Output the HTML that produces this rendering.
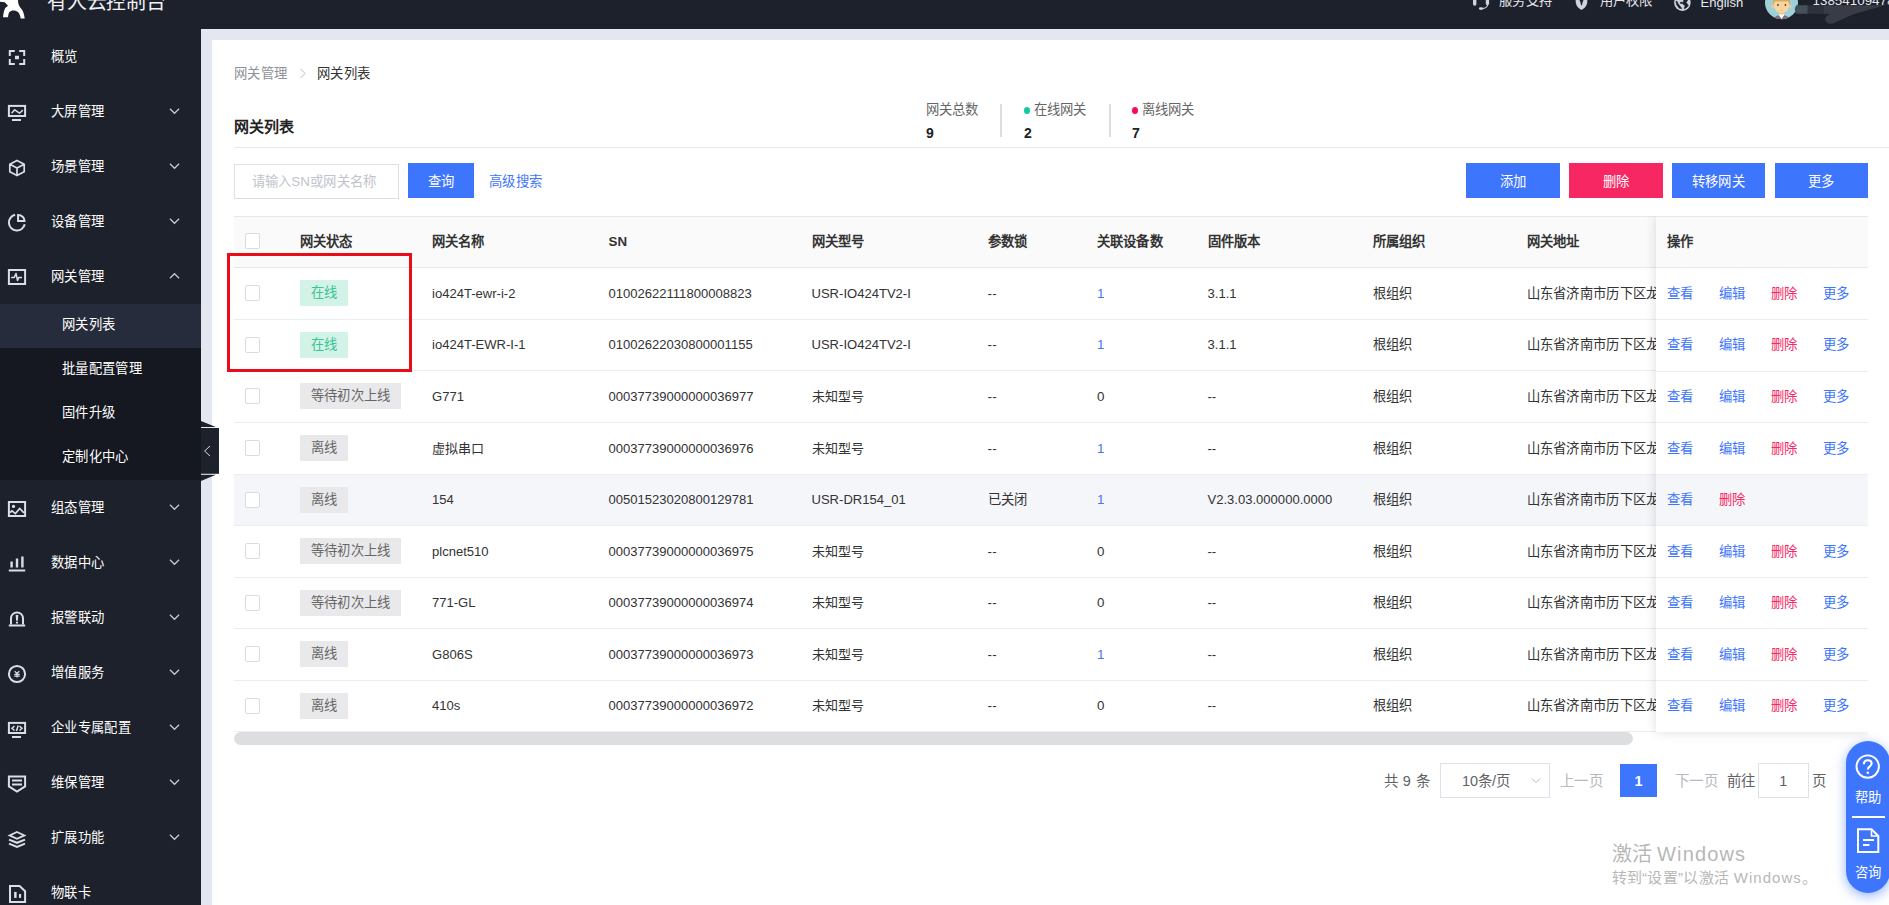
<!DOCTYPE html>
<html lang="zh-CN">
<head>
<meta charset="utf-8">
<title>有人云控制台 - 网关列表</title>
<style>
*{box-sizing:border-box;margin:0;padding:0}
html,body{width:1889px;height:905px;overflow:hidden;background:#fff}
body{position:relative;font-family:"Liberation Sans",sans-serif;font-size:13.33px;letter-spacing:.33px;color:#333;-webkit-font-smoothing:antialiased}
i{font-style:normal;display:block}
#top{position:absolute;left:0;top:0;width:1889px;height:28.5px;background:#1d212b;overflow:hidden;z-index:5}
#brand{letter-spacing:0;position:absolute;left:47px;top:-12.5px;font-size:19.9px;line-height:28px;color:#f1f2f6;white-space:nowrap;letter-spacing:-0.2px}
.tt{position:absolute;top:-7.6px;font-size:13.33px;line-height:18px;color:#e6e8ee;white-space:nowrap}
.ti{position:absolute}
#side{position:absolute;left:0;top:28.5px;width:201px;height:876.5px;background:#1d212b;overflow:hidden;z-index:4}
.mi{position:absolute;left:0;width:201px;height:55px}
.mi .ic{position:absolute;left:7px;top:17.5px;width:20px;height:20px}
.ml{position:absolute;left:51px;top:0;line-height:55.2px;font-size:13.33px;color:#fff;white-space:nowrap}
.chev{position:absolute;left:168.5px;top:23px;width:11px;height:8px}
#sub{position:absolute;left:0;top:275px;width:201px;height:176px;background:#151820}
.si{height:44px;line-height:42px;padding-left:62px;font-size:13.33px;color:#fff;white-space:nowrap}
.si.act{background:#262c3b}
#bgm{position:absolute;left:201px;top:28.5px;width:1688px;height:876.5px;background:#e4e7f0}
#bgp{position:absolute;left:212px;top:40px;width:1677px;height:865px;background:#fff}
#ct{position:absolute;left:0;top:0;width:1889px;height:905px}
.bc{position:absolute;left:234px;top:63.8px;height:20px;line-height:20px;white-space:nowrap}
.bc1{color:#8d9199}
.bc2{color:#333;position:absolute;left:83px;top:0}
.bcsep{position:absolute;left:65.3px;top:4.1px;width:7.6px;height:11px}
.h1{letter-spacing:.1px;position:absolute;left:234px;top:116px;font-size:15px;line-height:22px;font-weight:bold;color:#222;white-space:nowrap}
.st{position:absolute;top:100px;height:42px;white-space:nowrap}
.sl{position:absolute;left:0;top:.9px;line-height:18px;color:#666;font-size:13.33px;letter-spacing:.1px}
.sv{letter-spacing:0;position:absolute;left:0;top:24px;line-height:18px;font-size:14px;color:#222}
.dot{position:absolute;left:0;top:7px;width:6px;height:7px;border-radius:50%}
.sdiv{position:absolute;top:104px;width:1.5px;height:33px;background:#dcdde0}
.hr{position:absolute;left:234px;top:147px;width:1655px;height:1px;background:#e6e8f1}
.inp{position:absolute;left:234px;top:164px;width:165px;height:34.6px;border:1px solid #dcdfe6;background:#fff}
.inp span{position:absolute;left:16.6px;top:0;line-height:33px;color:#c0c4cc;white-space:nowrap;letter-spacing:.2px}
.btn{position:absolute;top:163px;height:35px;line-height:38.4px;text-align:center;color:#fff;background:#3d75fc;font-size:13.33px;white-space:nowrap}
.btn.red{background:#f62763}
.adv{position:absolute;left:489px;top:163px;line-height:38.5px;color:#3d75fc;white-space:nowrap}
#tbl{position:absolute;left:234px;top:216px;width:1634px;height:530px;overflow:hidden}
.th{position:absolute;left:0;top:0;width:1634px;height:52px;z-index:1;background:#fafafa;border-top:1px solid #e6e8f1;border-bottom:1px solid #e6e8f1;font-weight:bold;color:#333}
.th .c{line-height:50px;letter-spacing:.15px}
.tr{position:absolute;left:0;width:1634px;border-bottom:1px solid #ebedf4;background:#fff}
.tr.hov,.ftr.hov{background:#f5f6fa}
.c{position:absolute;top:0;line-height:inherit;white-space:nowrap}
.l{font-size:13.05px;letter-spacing:0}
.lk{color:#4a74f5}
.cb{position:absolute;left:10.8px;top:17.3px;width:15px;height:15.6px;border:1px solid #d9dce3;border-radius:2px;background:#fff}
.tag{position:absolute;left:66px;top:12.2px;height:26.3px;line-height:25.6px;padding:0 10.6px;font-size:13.33px;white-space:nowrap}
.tag.on{background:#d3f3e8;color:#3cc394}
.tag.off{background:#e9e9eb;color:#666}
#fix{z-index:2;position:absolute;left:1422px;top:0;width:212px;height:515.5px;background:#fff;box-shadow:0 0 11px rgba(0,0,0,.14)}
.fth{position:absolute;left:0;top:0;width:212px;height:52px;z-index:1;background:#fafafa;border-top:1px solid #e6e8f1;border-bottom:1px solid #e6e8f1;font-weight:bold}
.fth .c{line-height:50px;letter-spacing:.15px}
.ftr{position:absolute;left:0;width:212px;border-bottom:1px solid #ebedf4}
.a{position:absolute;top:0;line-height:inherit;color:#3d75fc;white-space:nowrap}
.a.del{color:#f62763}
.sb{position:absolute;left:0;top:516px;width:1399px;height:13px;border-radius:7px;background:#dddee0}
#redbox{z-index:3;position:absolute;left:227px;top:253px;width:185px;height:119px;border:3px solid #e80d18}
#pg{letter-spacing:.44px;position:absolute;left:0;top:763.5px;width:1889px;height:34px;font-size:14.44px;color:#606266}
.pt{position:absolute;top:0;line-height:35.4px;white-space:nowrap}
.pt.dis{color:#b6b9bf}
.psel{position:absolute;left:1440px;top:-.5px;width:109.6px;height:34.5px;border:1px solid #dde1ec;background:#fff}
.psel span{letter-spacing:0;position:absolute;left:21px;top:0;line-height:34.6px;white-space:nowrap;color:#606266}
.psel svg{position:absolute;left:90px;top:13px;width:10px;height:7px}
.pcur{letter-spacing:0;position:absolute;left:1620px;top:.5px;width:37px;height:33px;line-height:34.4px;text-align:center;background:#3d75fc;color:#fff;font-weight:bold}
.pinp{letter-spacing:0;position:absolute;left:1757.8px;top:-.5px;width:51px;height:34.5px;line-height:34.6px;border:1px solid #dde1ec;text-align:center;color:#606266}
#wm1{letter-spacing:0;position:absolute;left:1611.5px;top:839.5px;font-size:20px;line-height:28px;color:#b7b7b7;white-space:nowrap}
#wm2{position:absolute;left:1611.5px;top:867px;font-size:15px;line-height:22px;color:#b7b7b7;white-space:nowrap}
#help{position:absolute;left:1846px;top:741px;width:44px;height:152px;border-radius:22px;background:#3d75fc;box-shadow:0 3px 12px rgba(61,117,252,.55);z-index:6}
.hl{position:absolute;left:8.5px;font-size:13.33px;line-height:18px;color:#fff;white-space:nowrap}
.hd{position:absolute;left:6px;top:75.2px;width:33px;height:2px;background:#fff}
.hi{position:absolute}
#handle{position:absolute;left:201px;top:420px;width:18px;height:62px;z-index:6}

#wm1 span{letter-spacing:1.15px}
#wm2{letter-spacing:.3px}
#wm2 span{letter-spacing:1.05px}
.pt.w{word-spacing:1.2px;letter-spacing:0}
.ftr.last{border-bottom:none}

</style>
</head>
<body>
<div id="top"><svg class="ti" style="left:0;top:0" width="26" height="20" viewBox="0 0 26 20"><path fill="#fff" d="M0 0H18C18 4 19 6.5 21.5 9C23.5 11.5 24.3 15 24.7 18.5H20.7C20.3 15.5 19.5 13.5 18 12C16 10 11 9.8 9.3 12.2C8.6 13.5 8.2 15.5 8 17.3H3C3.3 14 4 10.5 5.2 8L8 5.8L4.8 2.3L0 1.8Z"/></svg><div id="brand">有人云控制台</div><svg class="ti" style="left:1470px;top:0" width="22" height="12" viewBox="0 0 22 12"><g fill="#d0d3dc"><rect x="3" y="-3" width="3.4" height="8.7" rx="1.6"/><rect x="15.8" y="-3" width="3.3" height="8.2" rx="1.6"/><ellipse cx="11" cy="8.6" rx="2.2" ry="1.4"/></g><path d="M17.6 5C17.2 7 15 8.4 12 8.6" fill="none" stroke="#d0d3dc" stroke-width="1.1"/></svg><span class="tt" style="left:1499px">服务支持</span><svg class="ti" style="left:1574px;top:0" width="16" height="12" viewBox="0 0 16 12"><path fill="#d0d3dc" d="M1.7 -4H13.3V1.5C13.3 5.5 10.5 8.5 7.5 10C4.5 8.5 1.7 5.5 1.7 1.5Z"/><path fill="#1d212b" d="M7.5 -1.2A1.7 1.7 0 0 1 8.6 1.9L8 5.2H7L6.4 1.9A1.7 1.7 0 0 1 7.5 -1.2Z"/></svg><span class="tt" style="left:1599.5px">用户权限</span><svg class="ti" style="left:1673px;top:0" width="20" height="12" viewBox="0 0 20 12"><circle cx="9.4" cy="2.7" r="8.25" fill="#d0d3dc"/><path fill="#1d212b" stroke="#1d212b" stroke-width=".5" stroke-linejoin="round" d="M3 1.15L4.2 1.4L5 3.6L8.5 8L8.8 8.8L6.2 8.3L3.6 4.7L2.9 1.7ZM10.5 0H14.7L13.2 2.6L15.5 5.5L13.2 8L11.4 8.8L11.1 8L12.1 5.7L9.2 3.6L7.3 3.4L7.1 2.6L8.2 2L9.9 2.4L10.8 .9Z"/></svg><span class="tt" style="left:1700.5px;font-size:13.05px;top:-6.4px;letter-spacing:0">English</span><span class="tt" style="left:1812.5px;font-size:13.4px;top:-8px;letter-spacing:0">13854109478</span><svg class="ti" style="left:1765px;top:-14px" width="34" height="34" viewBox="0 0 34 34"><defs><clipPath id="av"><circle cx="16.5" cy="16.7" r="16.5"/></clipPath></defs><g clip-path="url(#av)"><rect width="34" height="34" fill="#9fd0da"/><path d="M8 33.6L10.5 30.6L14 28.9H19L22.5 30.6L25 33.6Z" fill="#7a7080"/><rect x="14" y="24.5" width="5" height="5" fill="#efc08f"/><path d="M13.3 28.6H19.7L16.5 33Z" fill="#fff"/><circle cx="8" cy="20.3" r="1.6" fill="#f3c892"/><circle cx="25" cy="20.3" r="1.6" fill="#f3c892"/><ellipse cx="16.5" cy="19" rx="7.7" ry="8.2" fill="#f8d4a0"/><path d="M8.2 20.5C7 12 10 7 16.5 7C23 7 26 12 24.8 20.5C24.6 17.5 23.8 16 22.5 15.2C19 15.6 13 15.8 10.5 15.2C9.2 16 8.4 17.5 8.2 20.5Z" fill="#d8ab58"/><ellipse cx="13" cy="18.9" rx=".8" ry="1" fill="#3d3328"/><ellipse cx="20.4" cy="18.9" rx=".8" ry="1" fill="#3d3328"/><path d="M15 23.8Q16.5 24.5 18 23.8" stroke="#e9a98a" stroke-width=".6" fill="none"/></g></svg><svg class="ti" style="left:1792px;top:0" width="97" height="28" viewBox="0 0 97 28"><path d="M4.4 5.3H15.8V13.8H4.4Q1 9.5 4.4 5.3Z" fill="#43515c"/><rect x="15.8" y="5.3" width="16.1" height="8.5" fill="#2f323d"/><path d="M31.8 5.3H92L97 3.8V4.2L62 14L45 21.5Q40 25 36 23.2Q31.5 20.5 34 17L37.5 14L31.8 13.8Z" fill="#383c47"/></svg></div>
<div id="side"><div class="mi" style="top:0.0px"><svg class="ic" style="top:19.5px" viewBox="0 0 20 20" fill="none" stroke="#dcdee6" stroke-width="2"><path d="M2.8 8V3H7.8M12.2 3H17.2V8M17.2 11V16H12.2M7.8 16H2.8V11"/><rect x="8" y="7.75" width="4" height="3.5" fill="#dcdee6" stroke="none"/></svg><span class="ml">概览</span></div><div class="mi" style="top:55.0px"><svg class="ic" style="top:19.5px" viewBox="0 0 20 20" fill="none" stroke="#dcdee6" stroke-width="2"><rect x="1.9" y="2.9" width="16.2" height="10.1"/><path d="M5 17H14"/><path d="M5 9.8L7.7 6.8L12.5 10.2L15.5 7.5" stroke-width="1.5" stroke-linejoin="round" stroke-linecap="round"/></svg><span class="ml">大屏管理</span><svg class="chev" viewBox="0 0 12 8"><path d="M1 1.5 L6 6.5 L11 1.5" fill="none" stroke="#c9ccd4" stroke-width="1.3"/></svg></div><div class="mi" style="top:110.0px"><svg class="ic" style="top:19.0px" viewBox="0 0 20 20" fill="none" stroke="#dcdee6" stroke-width="2"><path d="M10 2.4L17.2 6.2V13.8L10 17.6L2.8 13.8V6.2ZM2.8 6.2L10 10L17.2 6.2M10 10V17.6" stroke-width="1.7" stroke-linejoin="round"/></svg><span class="ml">场景管理</span><svg class="chev" viewBox="0 0 12 8"><path d="M1 1.5 L6 6.5 L11 1.5" fill="none" stroke="#c9ccd4" stroke-width="1.3"/></svg></div><div class="mi" style="top:165.0px"><svg class="ic" style="top:19.0px" viewBox="0 0 20 20" fill="none" stroke="#dcdee6" stroke-width="2"><path d="M8.1 1.8A8 8 0 1 0 17.73 11.26"/><path d="M11.1 8V2A6.4 6 0 0 1 17.5 8Z"/></svg><span class="ml">设备管理</span><svg class="chev" viewBox="0 0 12 8"><path d="M1 1.5 L6 6.5 L11 1.5" fill="none" stroke="#c9ccd4" stroke-width="1.3"/></svg></div><div class="mi" style="top:220.0px"><svg class="ic" style="top:18.5px" viewBox="0 0 20 20" fill="none" stroke="#dcdee6" stroke-width="2"><rect x="1.9" y="3" width="16.2" height="14"/><path d="M4.1 10.4H7.3L9 6.5L10.5 13.4L11.8 10.4H15" stroke-width="1.5" stroke-linejoin="round"/></svg><span class="ml">网关管理</span><svg class="chev" viewBox="0 0 12 8"><path d="M1 6.5 L6 1.5 L11 6.5" fill="none" stroke="#c9ccd4" stroke-width="1.3"/></svg></div><div class="mi" style="top:451.5px"><svg class="ic" style="top:18.5px" viewBox="0 0 20 20" fill="none" stroke="#dcdee6" stroke-width="2"><rect x="1.9" y="3" width="16.2" height="14"/><circle cx="6.5" cy="7.4" r="1.6" fill="#dcdee6" stroke="none"/><path d="M3 13.5L5 11.9L8.4 14.6L12.7 9.5L17 13.8" stroke-width="1.7"/></svg><span class="ml">组态管理</span><svg class="chev" viewBox="0 0 12 8"><path d="M1 1.5 L6 6.5 L11 1.5" fill="none" stroke="#c9ccd4" stroke-width="1.3"/></svg></div><div class="mi" style="top:506.5px"><svg class="ic" style="top:19.0px" viewBox="0 0 20 20" fill="none" stroke="#dcdee6" stroke-width="2"><g fill="#dcdee6" stroke="none"><rect x="1.8" y="15.5" width="16.4" height="2"/><rect x="3.4" y="7.5" width="2.4" height="6"/><rect x="8.8" y="4.5" width="2.4" height="9"/><rect x="14.2" y="2.5" width="2.4" height="11"/></g></svg><span class="ml">数据中心</span><svg class="chev" viewBox="0 0 12 8"><path d="M1 1.5 L6 6.5 L11 1.5" fill="none" stroke="#c9ccd4" stroke-width="1.3"/></svg></div><div class="mi" style="top:561.5px"><svg class="ic" style="top:19.0px" viewBox="0 0 20 20" fill="none" stroke="#dcdee6" stroke-width="2"><path d="M4 15.5V9.4A6 6 0 0 1 16 9.4V15.5"/><path d="M1.8 16.5H18.2"/><g fill="#dcdee6" stroke="none"><path d="M8.7 6H11.3L10.9 11.8H9.1Z"/><rect x="9" y="12.7" width="2" height="1.8"/></g></svg><span class="ml">报警联动</span><svg class="chev" viewBox="0 0 12 8"><path d="M1 1.5 L6 6.5 L11 1.5" fill="none" stroke="#c9ccd4" stroke-width="1.3"/></svg></div><div class="mi" style="top:616.5px"><svg class="ic" style="top:18.899999999999977px" viewBox="0 0 20 20" fill="none" stroke="#dcdee6" stroke-width="2"><circle cx="10" cy="10" r="8.1"/><path d="M7.7 7.2L10 9.4L12.3 7.2M7.3 10.4H12.7M7.3 12.1H12.7M10 9.4V13.5" stroke-width="1.2"/></svg><span class="ml">增值服务</span><svg class="chev" viewBox="0 0 12 8"><path d="M1 1.5 L6 6.5 L11 1.5" fill="none" stroke="#c9ccd4" stroke-width="1.3"/></svg></div><div class="mi" style="top:671.5px"><svg class="ic" style="top:19.5px" viewBox="0 0 20 20" fill="none" stroke="#dcdee6" stroke-width="2"><rect x="1.9" y="2.9" width="16.2" height="10.1"/><path d="M5 17H14"/><path d="M7.5 6L5 8.3L7.5 10.5M11.2 5.5L9.4 10.9M12.5 6L15 8.3L12.5 10.5" stroke-width="1.5"/></svg><span class="ml">企业专属配置</span><svg class="chev" viewBox="0 0 12 8"><path d="M1 1.5 L6 6.5 L11 1.5" fill="none" stroke="#c9ccd4" stroke-width="1.3"/></svg></div><div class="mi" style="top:726.5px"><svg class="ic" style="top:19.0px" viewBox="0 0 20 20" fill="none" stroke="#dcdee6" stroke-width="2"><path d="M1.9 2.5H18.1V12.4L10 17.6L1.9 12.4Z"/><path d="M5 6.5H15M5 10.5H15"/></svg><span class="ml">维保管理</span><svg class="chev" viewBox="0 0 12 8"><path d="M1 1.5 L6 6.5 L11 1.5" fill="none" stroke="#c9ccd4" stroke-width="1.3"/></svg></div><div class="mi" style="top:781.5px"><svg class="ic" style="top:18.5px" viewBox="0 0 20 20" fill="none" stroke="#dcdee6" stroke-width="2"><path d="M10 3L17.4 6.4L10 9.8L2.6 6.4Z" stroke-width="1.8"/><path d="M2 10.6L10 13.8L18 10.6M2 14.6L10 17.9L18 14.6"/></svg><span class="ml">扩展功能</span><svg class="chev" viewBox="0 0 12 8"><path d="M1 1.5 L6 6.5 L11 1.5" fill="none" stroke="#c9ccd4" stroke-width="1.3"/></svg></div><div class="mi" style="top:836.5px"><svg class="ic" style="top:18.5px" viewBox="0 0 20 20" fill="none" stroke="#dcdee6" stroke-width="2"><path d="M3 2H12.6L18.1 7.2V18.1H3Z"/><g fill="#dcdee6" stroke="none"><rect x="7.1" y="7.9" width="2.5" height="6"/><rect x="12" y="10" width="2.1" height="3.9"/></g></svg><span class="ml">物联卡</span></div><div id="sub"><div class="si act">网关列表</div><div class="si">批量配置管理</div><div class="si">固件升级</div><div class="si">定制化中心</div></div></div>
<div id="bgm"></div><div id="bgp"></div><div id="ct"><div class="bc"><span class="bc1">网关管理</span><svg class="bcsep" viewBox="0 0 8 12"><path d="M1.5 1 L6.5 6 L1.5 11" fill="none" stroke="#b4b8c0" stroke-width="1"/></svg><span class="bc2">网关列表</span></div><div class="h1">网关列表</div><div class="st" style="left:926px"><span class="sl">网关总数</span><b class="sv">9</b></div><div class="sdiv" style="left:1000px"></div><div class="st" style="left:1024px"><i class="dot" style="background:#13c9a0"></i><span class="sl" style="left:10px">在线网关</span><b class="sv">2</b></div><div class="sdiv" style="left:1109px"></div><div class="st" style="left:1132px"><i class="dot" style="background:#f70b52"></i><span class="sl" style="left:10px">离线网关</span><b class="sv">7</b></div><div class="hr"></div><div class="inp"><span>请输入SN或网关名称</span></div><div class="btn" style="left:408px;width:66px">查询</div><div class="adv">高级搜索</div><div class="btn" style="left:1466px;width:94px">添加</div><div class="btn red" style="left:1569px;width:94px">删除</div><div class="btn" style="left:1672px;width:93px">转移网关</div><div class="btn" style="left:1775px;width:93px">更多</div><div id="tbl"><div class="th"><i class="cb" style="top:16px;height:16px"></i><span class="c" style="left:66px">网关状态</span><span class="c" style="left:198px">网关名称</span><span class="c" style="left:374.5px">SN</span><span class="c" style="left:577.5px">网关型号</span><span class="c" style="left:753.5px">参数锁</span><span class="c" style="left:863px">关联设备数</span><span class="c" style="left:973.5px">固件版本</span><span class="c" style="left:1138.5px">所属组织</span><span class="c" style="left:1292.5px">网关地址</span></div><div class="tr" style="top:52px;height:52px;line-height:51.5px"><i class="cb"></i><span class="tag on">在线</span><span class="c l" style="left:198px">io424T-ewr-i-2</span><span class="c l" style="left:374.5px">01002622111800008823</span><span class="c l" style="left:577.5px">USR-IO424TV2-I</span><span class="c" style="left:753.5px">--</span><span class="c lk" style="left:863px">1</span><span class="c l" style="left:973.5px">3.1.1</span><span class="c" style="left:1138.5px">根组织</span><span class="c addr" style="left:1292.5px">山东省济南市历下区龙奥北路</span></div><div class="tr" style="top:104px;height:51px;line-height:50.5px"><i class="cb"></i><span class="tag on">在线</span><span class="c l" style="left:198px">io424T-EWR-I-1</span><span class="c l" style="left:374.5px">01002622030800001155</span><span class="c l" style="left:577.5px">USR-IO424TV2-I</span><span class="c" style="left:753.5px">--</span><span class="c lk" style="left:863px">1</span><span class="c l" style="left:973.5px">3.1.1</span><span class="c" style="left:1138.5px">根组织</span><span class="c addr" style="left:1292.5px">山东省济南市历下区龙奥北路</span></div><div class="tr" style="top:155px;height:52px;line-height:51.5px"><i class="cb"></i><span class="tag off">等待初次上线</span><span class="c l" style="left:198px">G771</span><span class="c l" style="left:374.5px">00037739000000036977</span><span class="c l" style="left:577.5px">未知型号</span><span class="c" style="left:753.5px">--</span><span class="c" style="left:863px">0</span><span class="c l" style="left:973.5px">--</span><span class="c" style="left:1138.5px">根组织</span><span class="c addr" style="left:1292.5px">山东省济南市历下区龙奥北路</span></div><div class="tr" style="top:207px;height:52px;line-height:51.5px"><i class="cb"></i><span class="tag off">离线</span><span class="c l" style="left:198px">虚拟串口</span><span class="c l" style="left:374.5px">00037739000000036976</span><span class="c l" style="left:577.5px">未知型号</span><span class="c" style="left:753.5px">--</span><span class="c lk" style="left:863px">1</span><span class="c l" style="left:973.5px">--</span><span class="c" style="left:1138.5px">根组织</span><span class="c addr" style="left:1292.5px">山东省济南市历下区龙奥北路</span></div><div class="tr hov" style="top:259px;height:51px;line-height:50.5px"><i class="cb"></i><span class="tag off">离线</span><span class="c l" style="left:198px">154</span><span class="c l" style="left:374.5px">00501523020800129781</span><span class="c l" style="left:577.5px">USR-DR154_01</span><span class="c" style="left:753.5px">已关闭</span><span class="c lk" style="left:863px">1</span><span class="c l" style="left:973.5px">V2.3.03.000000.0000</span><span class="c" style="left:1138.5px">根组织</span><span class="c addr" style="left:1292.5px">山东省济南市历下区龙奥北路</span></div><div class="tr" style="top:310px;height:52px;line-height:51.5px"><i class="cb"></i><span class="tag off">等待初次上线</span><span class="c l" style="left:198px">plcnet510</span><span class="c l" style="left:374.5px">00037739000000036975</span><span class="c l" style="left:577.5px">未知型号</span><span class="c" style="left:753.5px">--</span><span class="c" style="left:863px">0</span><span class="c l" style="left:973.5px">--</span><span class="c" style="left:1138.5px">根组织</span><span class="c addr" style="left:1292.5px">山东省济南市历下区龙奥北路</span></div><div class="tr" style="top:362px;height:51px;line-height:50.5px"><i class="cb"></i><span class="tag off">等待初次上线</span><span class="c l" style="left:198px">771-GL</span><span class="c l" style="left:374.5px">00037739000000036974</span><span class="c l" style="left:577.5px">未知型号</span><span class="c" style="left:753.5px">--</span><span class="c" style="left:863px">0</span><span class="c l" style="left:973.5px">--</span><span class="c" style="left:1138.5px">根组织</span><span class="c addr" style="left:1292.5px">山东省济南市历下区龙奥北路</span></div><div class="tr" style="top:413px;height:52px;line-height:51.5px"><i class="cb"></i><span class="tag off">离线</span><span class="c l" style="left:198px">G806S</span><span class="c l" style="left:374.5px">00037739000000036973</span><span class="c l" style="left:577.5px">未知型号</span><span class="c" style="left:753.5px">--</span><span class="c lk" style="left:863px">1</span><span class="c l" style="left:973.5px">--</span><span class="c" style="left:1138.5px">根组织</span><span class="c addr" style="left:1292.5px">山东省济南市历下区龙奥北路</span></div><div class="tr" style="top:465px;height:51px;line-height:50.5px"><i class="cb"></i><span class="tag off">离线</span><span class="c l" style="left:198px">410s</span><span class="c l" style="left:374.5px">00037739000000036972</span><span class="c l" style="left:577.5px">未知型号</span><span class="c" style="left:753.5px">--</span><span class="c" style="left:863px">0</span><span class="c l" style="left:973.5px">--</span><span class="c" style="left:1138.5px">根组织</span><span class="c addr" style="left:1292.5px">山东省济南市历下区龙奥北路</span></div><div id="fix"><div class="fth"><span class="c" style="left:11px">操作</span></div><div class="ftr" style="top:52px;height:52px;line-height:51.5px"><span class="a" style="left:11px">查看</span><span class="a" style="left:63px">编辑</span><span class="a del" style="left:115px">删除</span><span class="a" style="left:167px">更多</span></div><div class="ftr" style="top:104px;height:52px;line-height:50.5px"><span class="a" style="left:11px">查看</span><span class="a" style="left:63px">编辑</span><span class="a del" style="left:115px">删除</span><span class="a" style="left:167px">更多</span></div><div class="ftr" style="top:155px;height:52px;line-height:51.5px"><span class="a" style="left:11px">查看</span><span class="a" style="left:63px">编辑</span><span class="a del" style="left:115px">删除</span><span class="a" style="left:167px">更多</span></div><div class="ftr" style="top:207px;height:52px;line-height:51.5px"><span class="a" style="left:11px">查看</span><span class="a" style="left:63px">编辑</span><span class="a del" style="left:115px">删除</span><span class="a" style="left:167px">更多</span></div><div class="ftr hov" style="top:259px;height:51px;line-height:50.5px"><span class="a" style="left:11px">查看</span><span class="a del" style="left:63px">删除</span></div><div class="ftr" style="top:310px;height:52px;line-height:51.5px"><span class="a" style="left:11px">查看</span><span class="a" style="left:63px">编辑</span><span class="a del" style="left:115px">删除</span><span class="a" style="left:167px">更多</span></div><div class="ftr" style="top:362px;height:51px;line-height:50.5px"><span class="a" style="left:11px">查看</span><span class="a" style="left:63px">编辑</span><span class="a del" style="left:115px">删除</span><span class="a" style="left:167px">更多</span></div><div class="ftr" style="top:413px;height:52px;line-height:51.5px"><span class="a" style="left:11px">查看</span><span class="a" style="left:63px">编辑</span><span class="a del" style="left:115px">删除</span><span class="a" style="left:167px">更多</span></div><div class="ftr last" style="top:465px;height:51px;line-height:50.5px"><span class="a" style="left:11px">查看</span><span class="a" style="left:63px">编辑</span><span class="a del" style="left:115px">删除</span><span class="a" style="left:167px">更多</span></div></div><div class="sb"></div></div><div id="redbox"></div><div id="pg"><span class="pt w" style="left:1383.5px">共 9 条</span><div class="psel"><span>10条/页</span><svg viewBox="0 0 12 8"><path d="M1 1.5 L6 6.5 L11 1.5" fill="none" stroke="#b4b8c0" stroke-width="1.2"/></svg></div><span class="pt dis" style="left:1560px">上一页</span><div class="pcur">1</div><span class="pt dis" style="left:1675px">下一页</span><span class="pt" style="left:1727px">前往</span><div class="pinp">1</div><span class="pt" style="left:1812px">页</span></div><div id="wm1">激活 <span>Windows</span></div><div id="wm2">转到“设置”以激活 <span>Windows</span>。</div></div>
<svg id="handle" viewBox="0 0 18 62"><g fill="#1d212b"><path d="M0 1L15.5 7.2H0Z"/><rect x="0" y="8" width="18" height="45.8"/><path d="M0 54.55H15.5L0 61Z"/></g><rect x="0" y="7.25" width="16.5" height=".75" fill="#fff"/><rect x="0" y="53.95" width="16.5" height=".6" fill="#fff"/><path d="M9 26L3.6 31L9 36" fill="none" stroke="#d6dcea" stroke-width="1"/></svg><div id="help"><svg class="hi" style="left:9px;top:12.6px" width="26" height="26" viewBox="0 0 26 26"><circle cx="12.7" cy="12.6" r="11.2" fill="none" stroke="#fff" stroke-width="1.9"/><path d="M8.9 10.2C8.9 7.6 10.6 6.3 12.8 6.3C15 6.3 16.6 7.7 16.6 9.6C16.6 12.3 12.8 12.6 12.8 15.6" fill="none" stroke="#fff" stroke-width="2.1"/><circle cx="12.8" cy="18.7" r="1.3" fill="#fff"/></svg><span class="hl" style="top:48px">帮助</span><i class="hd"></i><svg class="hi" style="left:10px;top:86px" width="26" height="28" viewBox="0 0 26 28"><path d="M2 2.3H15.5L22.3 9V25H2Z" fill="none" stroke="#fff" stroke-width="2"/><path d="M15.5 2.3V9H22.3" fill="none" stroke="#fff" stroke-width="1.6"/><path d="M7 12.9H18M7 17.9H13.4" stroke="#fff" stroke-width="2" fill="none"/></svg><span class="hl" style="top:123.3px">咨询</span></div>
</body>
</html>
